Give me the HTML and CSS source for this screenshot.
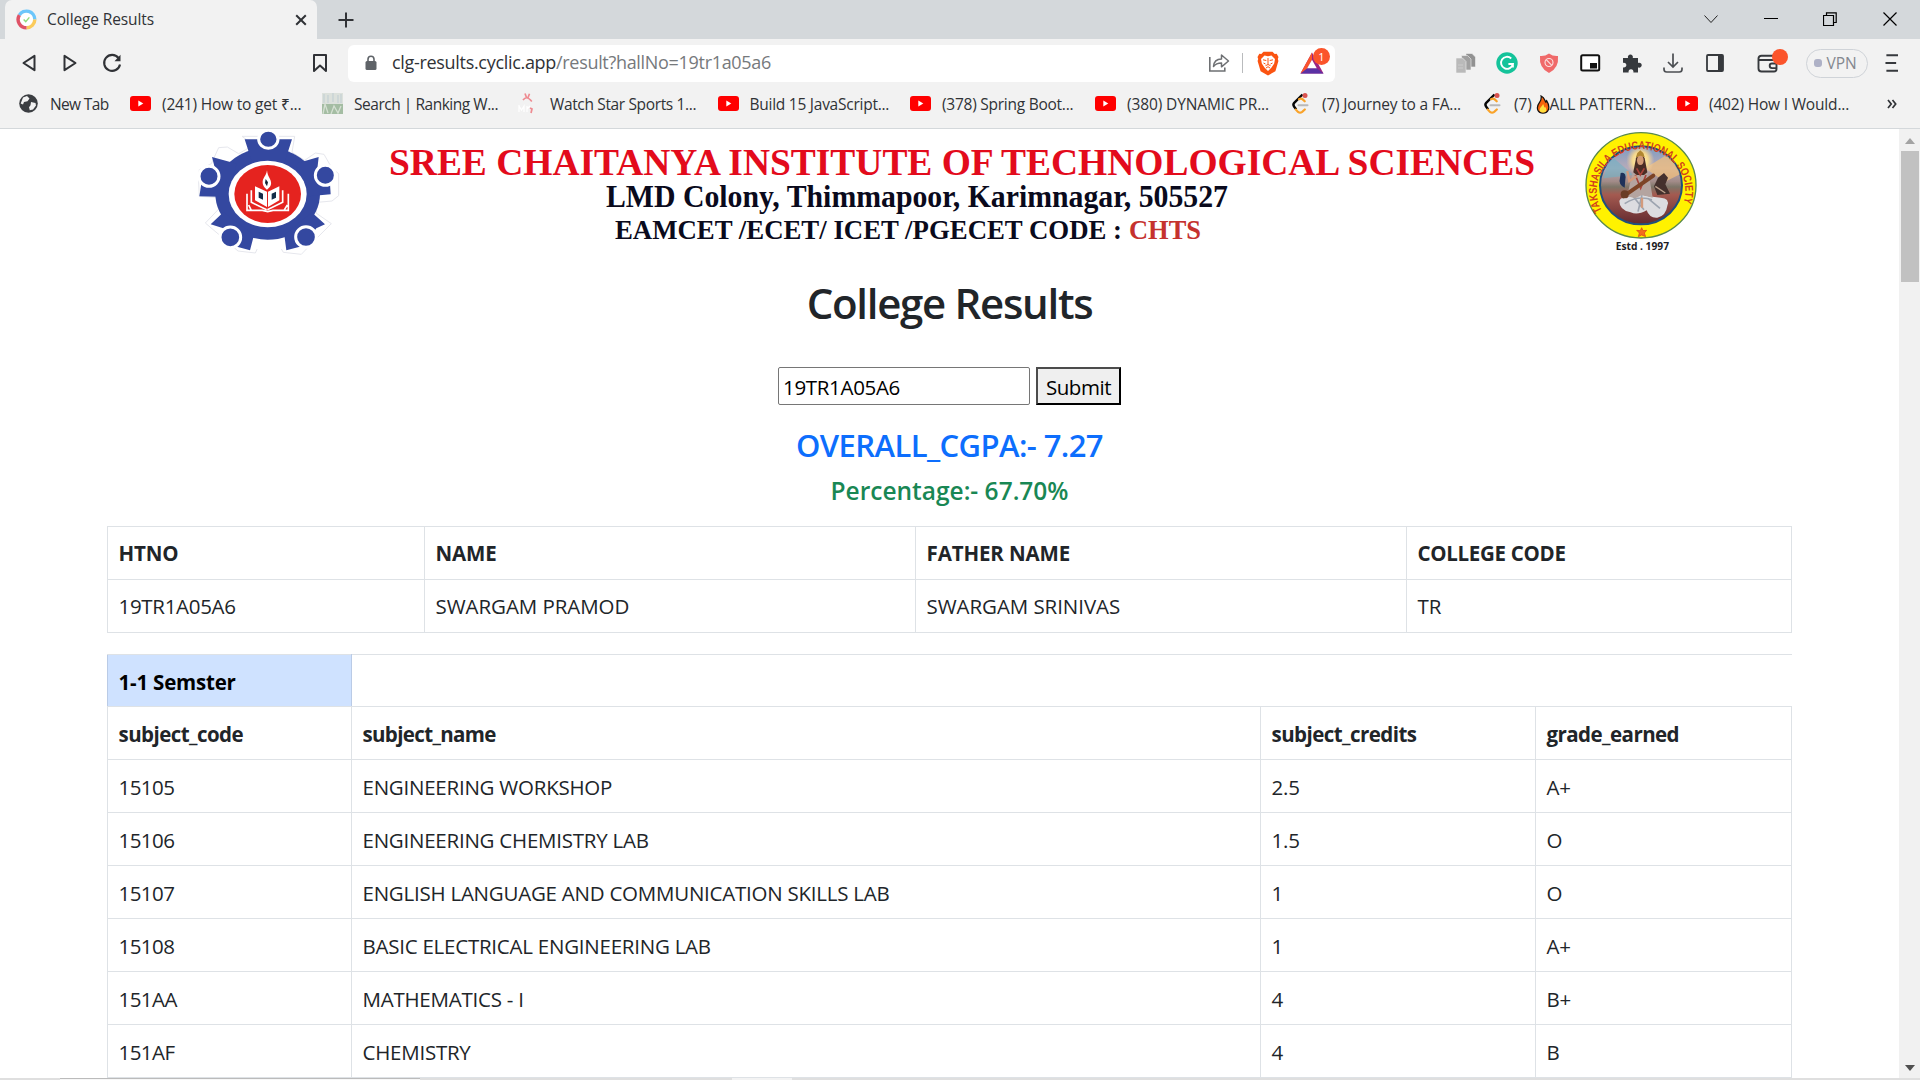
FILE: index.html
```html
<!DOCTYPE html>
<html lang="en">
<head>
<meta charset="utf-8">
<title>College Results</title>
<link rel="stylesheet" href="styles.css">
</head>
<body>
<svg class="defs" width="0" height="0" aria-hidden="true">
  <symbol id="youtube" viewBox="0 0 21 21">
    <rect x="0" y="3" width="21" height="15" rx="3" fill="#f00"/>
    <path d="M8.3 7.6v5.8l5-2.9z" fill="#fff"/>
  </symbol>
  <symbol id="leetcode" viewBox="0 0 21 21">
    <path d="M12.500 1.500 4.200 9.900q-1.600 1.800 0 3.800l2 2.700" fill="none" stroke="#070707" stroke-width="2.400"/>
    <path d="M5.800 16.600 8 18.900q2 1.500 4.200 0l2.600-2.400M9 6.200q2.300-1.200 4 .4l1.700 1.700" fill="none" stroke="#f9a32a" stroke-width="2.200" stroke-linecap="round"/>
    <path d="M8.500 12.300h9" stroke="#b9b9b9" stroke-width="2" stroke-linecap="round"/>
    <circle cx="15" cy="2.600" r="2.500" fill="#d9534f"/>
  </symbol>
</svg>

<header class="browser">
  <div class="tabstrip">
    <div class="tab">
      <svg class="favicon" viewBox="0 0 22 22" width="21" height="21">
        <circle cx="11" cy="11" r="7" fill="#fff"/>
        <g fill="none" stroke-width="3.600">
          <path d="M3.500 6.500A8.700 8.700 0 0 1 19.700 11" stroke="#6cc6fb"/>
          <path d="M19.700 11A8.700 8.700 0 0 1 11 19.700" stroke="#fbcb5b"/>
          <path d="M11 19.700A8.700 8.700 0 0 1 3.500 6.500" stroke="#df5266"/>
        </g>
        <path d="m8 11 2.200 2.200L14 8.800" fill="none" stroke="#8fdc7b" stroke-width="1.500"/>
      </svg>
      <span class="tab-title">College Results</span>
      <svg class="tab-close" viewBox="0 0 12 12" width="12" height="12"><path d="m1.200 1.200 9.600 9.600m0-9.600-9.600 9.600" stroke="#303236" stroke-width="2"/></svg>
    </div>
    <svg class="new-tab" viewBox="0 0 16 16" width="16" height="16"><path d="M8 .5v15M.5 8h15" stroke="#303236" stroke-width="2"/></svg>
    <div class="window-buttons">
      <svg viewBox="0 0 14 14"><path d="m.5 3.500 6.500 7 6.500-7" fill="none" stroke="#222"/></svg>
      <svg viewBox="0 0 14 14"><path d="M0 6.500h14" stroke="#000"/></svg>
      <svg viewBox="0 0 14 14"><path d="M.5 3.500h10v10H.5zM3.500 3V.8h9.700v9.700H11" fill="none" stroke="#000" stroke-width="1.200"/></svg>
      <svg viewBox="0 0 14 14"><path d="m.5.500 13 13m0-13-13 13" stroke="#000" stroke-width="1.200"/></svg>
    </div>
  </div>

  <div class="toolbar">
    <nav class="nav-buttons">
      <svg viewBox="0 0 24 24"><path d="M17.500 4.800v14.400L6.500 12z" fill="none" stroke="#303236" stroke-width="2" stroke-linejoin="round"/></svg>
      <svg viewBox="0 0 24 24"><path d="M6.500 4.800v14.400L17.500 12z" fill="none" stroke="#303236" stroke-width="2" stroke-linejoin="round"/></svg>
      <svg viewBox="0 0 24 24"><path d="M18.500 7A8 8 0 1 0 20 13.500" fill="none" stroke="#303236" stroke-width="2.100"/><path d="M20.500 3.800v6.500H14.500z" fill="#303236"/></svg>
    </nav>
    <svg class="bookmark" viewBox="0 0 24 24"><path d="M6 4h12v16l-6-5.500L6 20z" fill="none" stroke="#303236" stroke-width="2" stroke-linejoin="round"/></svg>
    <div class="address">
      <svg class="lock" viewBox="0 0 12 16"><rect x=".5" y="6" width="11" height="9" rx="1.500" fill="#5f6368"/><path d="M3 7V4.200a3 3 0 0 1 6 0V7" fill="none" stroke="#5f6368" stroke-width="1.600"/></svg>
      <span class="url"><span class="host">clg-results.cyclic.app</span>/result?hallNo=19tr1a05a6</span>
      <svg class="share" viewBox="0 0 22 20"><path d="M1.800 4v14h15v-3.500" fill="none" stroke="#6e7073" stroke-width="1.600"/><path d="M5.500 13.500c.4-5.500 3.400-7.500 8-7.500V2l7 6-7 5.800V10c-4 0-6 .8-8 3.500z" fill="none" stroke="#6e7073" stroke-width="1.500" stroke-linejoin="round"/></svg>
      <i class="divider"></i>
      <svg class="lion" viewBox="0 0 22 25"><path d="M6.500.800h9l2.200 2.300 2-.3L21.500 6l-.7 2 .6 2-3 10.300L11 24.500l-7.400-4.200L.6 10l.6-2L.5 6l1.800-3.200 2 .3z" fill="#fb5412"/><path d="m7.500 4.500 3.500.7 3.500-.7 3.500 3.600-.8 4.500-2.700 3.900L11 20l-3.500-3.500-2.700-3.900L4 8.100z" fill="#fff"/><path d="m6 8.800 3.300.7M16 8.800l-3.300.7M11 7v6.500m-2.500 1.200L11 13.500l2.500 1.200M9 17l2-1.300 2 1.300M6.500 12l2 1M15.500 12l-2 1" stroke="#fb5412" stroke-width="1" fill="none"/></svg>
      <div class="rewards">
        <svg viewBox="0 0 24 22"><path d="M12 .500 23.500 21.500H.500z" fill="#9b2483"/><path d="M.500 21.500h23l-6.700-5.200H7.200z" fill="#5a31a4"/><path d="M12 .500.500 21.500l6.700-5.200L12 7.800z" fill="#fb542b"/><path d="m12 7.800 4.800 8.500H7.200z" fill="#fff"/></svg>
        <span class="badge">1</span>
      </div>
    </div>
    <div class="extensions">
      <svg viewBox="0 0 24 24"><g stroke="#f2f2f2" stroke-width=".6"><path d="M12 2.500h6l3.500 3.500v10H12z" fill="#929292"/><path d="M7.500 4.500h6L17 8v11H7.500z" fill="#a0a0a0"/><path d="M2 7h6.500l3.500 3.500v11.500H2z" fill="#bababa"/></g><path d="M4 14h5M4 17h5" stroke="#ccc"/></svg>
      <svg viewBox="0 0 24 24"><circle cx="12" cy="12" r="10.700" fill="#14c39a"/><path d="M16.200 7.500a6 6 0 1 0 1.700 5.500h-4.500m4.500 0v3.600" fill="none" stroke="#fff" stroke-width="1.900"/></svg>
      <svg viewBox="0 0 24 24"><path d="M12 2.500q4 3 9 2.500 1.200 12-9 17Q1.800 17 3 5q5 .500 9-2.500z" fill="#f06a6a"/><circle cx="12" cy="11.500" r="4" fill="none" stroke="#fbe3e3" stroke-width="1.100"/><path d="m9.200 8.700 5.600 5.600" stroke="#fbe3e3" stroke-width="1.100"/></svg>
      <svg viewBox="0 0 24 24"><rect x="3.200" y="4.300" width="18" height="15.300" rx="1.500" fill="#fff" stroke="#111" stroke-width="2"/><path d="M12 12h7v5.500h-7z" fill="#111"/></svg>
      <svg viewBox="0 0 24 24"><path d="M3 7h5c-1.200-4.800 6-4.800 4.800 0H18v5c5-1.200 5 5.800 0 4.600V21.500h-4.600c1-4.500-5.800-4.500-4.800 0H3v-5c4.500.8 4.500-5.500 0-4.600z" fill="#36393d"/></svg>
      <svg viewBox="0 0 24 24"><path d="M12 2.500V16m-5-5 5 5 5-5M3 16.500v1.800q0 2.700 2.700 2.700h12.600q2.700 0 2.700-2.700v-1.800" fill="none" stroke="#4b4e52" stroke-width="1.700"/></svg>
      <svg viewBox="0 0 24 24"><rect x="4" y="4" width="16" height="16" rx="1" fill="none" stroke="#36393d" stroke-width="1.800"/><path d="M15 4h5v16h-5z" fill="#36393d"/></svg>
    </div>
    <div class="wallet">
      <svg viewBox="0 0 24 24"><path d="M17 4.800H5.500Q2.500 4.800 2.500 7.500v10q0 3 3 3H18q2.500 0 2.500-2.500v-6.500Q20.500 9 18 9H3m17.500 3.500h-4.500a2.300 2.300 0 0 0 0 4.600h4.500" fill="none" stroke="#36393d" stroke-width="1.900"/></svg>
      <i class="dot"></i>
    </div>
    <div class="vpn"><i class="vpn-dot"></i>VPN</div>
    <svg class="menu" viewBox="0 0 14 20"><path d="M1.500 1.700H14M.5 10h11.500M1.500 18.300H14" stroke="#36393d" stroke-width="2.100"/></svg>
  </div>

  <nav class="bookmarks">
    <a class="bm"><svg viewBox="0 0 21 21"><circle cx="10.500" cy="10.500" r="9.300" fill="#3b3e42"/><path d="M5 4.500 9 3l2.500 2.500-2 2.700-3.500.8-1 2.500-2.300-1zM13 9l4.500 1 .5 2.500-3 4-3.200.8-.8-3 1.500-2z" fill="#f2f2f2"/></svg><span class="w-newtab">New Tab</span></a>
    <a class="bm"><svg><use href="#youtube"/></svg><span class="w-norm">(241) How to get ₹...</span></a>
    <a class="bm"><svg viewBox="0 0 21 21"><path d="M0 0h21v11H0z" fill="#dce1dc"/><path d="M2 1v9M6 2v8M11 0v9M16 2v8M19 1v9" stroke="#c6d2d4" stroke-width="1.300"/><path d="M0 11h21v10H0z" fill="#a4bda3"/><path d="M1 21 3 11l3 9M9 21l3-8 4 7 3-7" fill="none" stroke="#d5e0d3" stroke-width="1.300"/></svg><span class="w-tight">Search | Ranking W...</span></a>
    <a class="bm"><svg viewBox="0 0 21 21"><path d="m7 .5 1.500 4M11.500.800 10 4.500M5 7q3.500-4.500 7.500 0l1.300 1.500M12 15l2 1-1 4" fill="none" stroke="#ee8b91" stroke-width="1.700"/><path d="M1 12v7m0-6 2.500 4L6 13v6m3-6v6m0-3 3-3" fill="none" stroke="#fff" stroke-width="1.200"/></svg><span class="w-star">Watch Star Sports 1...</span></a>
    <a class="bm"><svg><use href="#youtube"/></svg><span class="w-js">Build 15 JavaScript...</span></a>
    <a class="bm"><svg><use href="#youtube"/></svg><span class="w-js">(378) Spring Boot...</span></a>
    <a class="bm"><svg><use href="#youtube"/></svg><span class="w-dyn">(380) DYNAMIC PR...</span></a>
    <a class="bm"><svg><use href="#leetcode"/></svg><span class="w-norm">(7) Journey to a FA...</span></a>
    <a class="bm"><svg><use href="#leetcode"/></svg><span class="w-dyn">(7) <svg class="flame" viewBox="0 0 14 20"><path d="M5 1c4 2 3.500 4.500 5 6.500l.8-1.500c2.500 4 3 7.500 1.500 10.200C10.500 20 3.500 20 1.700 16.200.200 13 2 9.500 3.500 7.500 5 5.500 5.500 4 5 1z" fill="#f7630c" stroke="#111" stroke-width="1.300"/><path d="M7 9.500c-1 3-4 4-3.500 7 .8 2.500 6.300 2.500 7-.3.300-1.700-.8-2.700-1.300-4l-.8 1.200C8 12 8 10.500 7 9.500z" fill="#ffdf3d"/></svg>ALL PATTERN...</span></a>
    <a class="bm"><svg><use href="#youtube"/></svg><span class="w-norm">(402) How I Would...</span></a>
    <svg class="more" viewBox="0 0 10 10"><path d="m1 1 3.200 4L1 9m4.500-8L8.700 5 5.500 9" fill="none" stroke="#303236" stroke-width="1.700"/></svg>
  </nav>
</header>

<div class="viewport">
  <main class="page">
    <div class="banner">
      <svg class="gear-logo" viewBox="0 12 450 378">
        <path d="M156 34h158l-8 48 38 24 32-22 26 4 24 42 20 16v66l-20 16-44 4-4 32 46 32-46 46-44 46-54-6-12-20h-62l-10 22-52-6-58-50-40-34 48-50-6-26-60-4-2-40 2-40 36-18 22-48 26-2 34 20 46-26z" fill="#fff" stroke="#e6e7ed" stroke-width="3" stroke-linejoin="round"/>
        <g fill="#3448a0">
          <ellipse cx="233" cy="206" rx="157" ry="138"/>
          <path d="M164 43h142l-20 62H184zM66 96l74 20-30 100-82-2 6-38 46-26zM386 96l-70 20 40 98 66-6-2-32-40-26zM62 298l38-36 92 68-12 46-50-14-30-52zM405 298l-40-36-82 68 6 46 52-14 38-52z"/>
        </g>
        <path d="m186 372 12-25q35 6 74 0l14 25z" fill="#fff"/>
        <g fill="#3448a0" stroke="#fff" stroke-width="9">
          <ellipse cx="235" cy="43" rx="29" ry="27"/><circle cx="57" cy="154" r="30"/><circle cx="406" cy="151" r="30"/><circle cx="121" cy="337" r="31"/><circle cx="348" cy="336" r="31"/>
        </g>
        <ellipse cx="233" cy="207" rx="117" ry="100" fill="#fff"/>
        <ellipse cx="233" cy="207" rx="100" ry="87" fill="#e5231f"/>
        <path d="M231 136c-2 18-14 22-13 38 2 12 8 16 13 20 6-4 14-12 12-22-1-12-10-16-12-36z" fill="#fff"/>
        <path d="m227 162 7 10-3 12-6-10z" fill="#123"/>
        <path d="m195 184 36 16v46l-36-20zM268 184l-34 16v46l34-20z" fill="#fff"/>
        <path d="m206 200 13 6v18l-13-6zM258 200l-13 6v18l13-6z" fill="#132c48"/>
        <path d="M184 196v36l46 22M171 206v50h46l16 4 16-4h46v-50M278 196v36l-46 22M184 256l-8-16m106 16 10-16" fill="none" stroke="#fff" stroke-width="5"/>
      </svg>
      <svg class="banner-text" viewBox="0 0 1180 126">
        <text class="college" x="9" y="45.500" textLength="1146" lengthAdjust="spacingAndGlyphs">SREE CHAITANYA INSTITUTE OF TECHNOLOGICAL SCIENCES</text>
        <text class="place" x="226" y="78" textLength="622" lengthAdjust="spacingAndGlyphs">LMD Colony, Thimmapoor, Karimnagar, 505527</text>
        <text class="codes" x="235" y="110" textLength="507" lengthAdjust="spacingAndGlyphs">EAMCET /ECET/ ICET /PGECET CODE :</text>
        <text class="codes chts" x="749" y="110" textLength="72" lengthAdjust="spacingAndGlyphs">CHTS</text>
      </svg>
      <svg class="seal" viewBox="0 12 450 378">
        <defs>
          <linearGradient id="sky" x1="0" y1="0" x2="0" y2="1"><stop offset="0" stop-color="#7d9cc2"/><stop offset=".28" stop-color="#b7abb9"/><stop offset=".45" stop-color="#a28b88"/><stop offset=".52" stop-color="#7d7568"/><stop offset=".62" stop-color="#a45a50"/><stop offset="1" stop-color="#62292f"/></linearGradient>
          <radialGradient id="halo"><stop offset="0" stop-color="#fff3bd"/><stop offset=".55" stop-color="#f5d98e"/><stop offset="1" stop-color="#f3cba0" stop-opacity="0"/></radialGradient>
          <clipPath id="disc"><ellipse cx="213" cy="181" rx="122" ry="115"/></clipPath>
          <path id="arc" d="M96 258A133 126 0 1 1 332 255"/>
        </defs>
        <ellipse cx="213" cy="181" rx="165" ry="158" fill="#fff200" stroke="#5a8a4a" stroke-width="4"/>
        <ellipse cx="213" cy="181" rx="123" ry="117" fill="url(#sky)" stroke="#1f4f7d" stroke-width="6"/>
        <g clip-path="url(#disc)">
          <path d="m225 130 80-50 40 60-60 30z" fill="#f3c07a" opacity=".7"/><path d="m120 90 70 60-90 10z" fill="#6fb3c4" opacity=".6"/>
          <ellipse cx="211" cy="106" rx="42" ry="46" fill="url(#halo)"/>
          <path d="M148 228q6-14 22-8l20-16 46 10 36 4q28 2 20 24-4 30-30 36-24 2-32-22-28 16-48 6-34-6-34-34z" fill="#dcdce0"/>
          <path d="M164 236q40-26 82-12M186 210l36 44m-6-44-12 50m30-40 36 30" stroke="#9da4b0" stroke-width="5" fill="none"/>
          <path d="M192 130q-14 50-20 84l24 6 20-10 32 8q-6-46-18-88z" fill="#b4a4a0"/>
          <path d="M198 100q12-30 26 0l8 42-10 8h-22l-10-8z" fill="#4b2d25"/>
          <path d="m198 96 4-12 9-8 9 8 4 12z" fill="#b1862f"/>
          <ellipse cx="211" cy="106" rx="10" ry="14" fill="#d29a74"/>
          <path d="m200 130 11 20 12-20M196 150l16 40 16-40" stroke="#a8423a" stroke-width="5" fill="none"/>
          <path d="m160 214 90-62" stroke="#7c4326" stroke-width="12" stroke-linecap="round"/><circle cx="164" cy="208" r="12" fill="#6b3d26"/>
          <path d="M152 144q18-4 14 20l-2 24q-20-10-14-30z" fill="#1e3159"/>
          <path d="m264 158 18-14 12 14-8 20 14 28-38 4-10-26z" fill="#44302d"/><path d="m256 184 30 20" stroke="#bca08b" stroke-width="4"/>
          <path d="m172 138 6 30 22-14M216 218v30" stroke="#d39a7c" stroke-width="7" fill="none"/>
        </g>
        <text class="seal-ring"><textPath href="#arc" textLength="505" lengthAdjust="spacingAndGlyphs">TAKSHASILA EDUCATIONAL SOCIETY</textPath></text>
        <path d="m215 308 4 9 11-1-7 8 4 11-12-5-10 5 3-11-8-8 11 1z" fill="#f26c1d" stroke="#d43a1a" stroke-width="2"/>
        <text class="estd" x="137" y="374" textLength="160" lengthAdjust="spacingAndGlyphs">Estd . 1997</text>
      </svg>
    </div>

    <h1 class="title">College Results</h1>
    <form class="lookup">
      <input class="hall" type="text" value="19TR1A05A6">
      <button class="submit" type="button">Submit</button>
    </form>
    <h2 class="cgpa">OVERALL_CGPA:- 7.27</h2>
    <h3 class="percent">Percentage:- 67.70%</h3>

    <table class="grid student">
      <colgroup><col class="s1"><col class="s2"><col class="s2"><col></colgroup>
      <tr class="caps"><th>HTNO</th><th>NAME</th><th>FATHER NAME</th><th class="college-code">COLLEGE CODE</th></tr>
      <tr class="person"><td>19TR1A05A6</td><td>SWARGAM PRAMOD</td><td>SWARGAM SRINIVAS</td><td>TR</td></tr>
    </table>

    <table class="grid semester">
      <colgroup><col class="c1"><col class="c2"><col class="c3"><col></colgroup>
      <tr class="sem-row"><th class="sem">1-1 Semster</th><td class="blank" colspan="3"></td></tr>
      <tr><th>subject_code</th><th class="subject">subject_name</th><th>subject_credits</th><th>grade_earned</th></tr>
      <tr><td class="code">15105</td><td>ENGINEERING WORKSHOP</td><td>2.5</td><td>A+</td></tr>
      <tr><td class="code">15106</td><td>ENGINEERING CHEMISTRY LAB</td><td>1.5</td><td>O</td></tr>
      <tr><td class="code">15107</td><td>ENGLISH LANGUAGE AND COMMUNICATION SKILLS LAB</td><td>1</td><td>O</td></tr>
      <tr><td class="code">15108</td><td>BASIC ELECTRICAL ENGINEERING LAB</td><td>1</td><td>A+</td></tr>
      <tr><td class="code">151AA</td><td>MATHEMATICS - I</td><td>4</td><td>B+</td></tr>
      <tr><td class="code">151AF</td><td>CHEMISTRY</td><td>4</td><td>B</td></tr>
    </table>
  </main>
  <div class="scrollbar">
    <svg viewBox="0 0 10 6"><path d="m5 0 5 6H0z" fill="#a3a3a3"/></svg>
    <div class="thumb"></div>
    <svg class="down" viewBox="0 0 10 6"><path d="m5 6 5-6H0z" fill="#505050"/></svg>
  </div>
</div>
<footer class="edge"><i class="edge-search"></i><i class="edge-app"></i></footer>
</body>
</html>
```
FILE: styles.css
```css
* { box-sizing: border-box; }

body {
  margin: 0;
  width: 1920px;
  height: 1080px;
  display: flex;
  flex-direction: column;
  overflow: hidden;
  background: #fff;
  color: #212529;
  font-family: "Open Sans", "Noto Sans", sans-serif;
}

svg { display: block; flex: none; }
.defs { position: absolute; }

/* Browser chrome */
.browser {
  flex: none;
  height: 129px;
  background: #f2f2f2;
  border-bottom: 1px solid #d4d8db;
  color: #303236;
}

.tabstrip {
  display: flex;
  align-items: center;
  height: 39px;
  padding-left: 5px;
  background: #d4d8db;
}
.tab {
  display: flex;
  align-items: center;
  width: 312px;
  height: 39px;
  padding: 0 10px 0 11px;
  background: #f2f2f2;
  border-radius: 7px 7px 0 0;
}
.tab-title { flex: 1; margin-left: 10px; padding-bottom: 1px; font-size: 15.500px; letter-spacing: -.12px; }
.new-tab { margin-left: 21px; }
.window-buttons { display: flex; gap: 45.500px; margin-left: auto; padding: 0 23.500px 1px 0; }
.window-buttons svg { width: 14px; height: 14px; }

.toolbar { display: flex; align-items: center; height: 48px; }
.nav-buttons { display: grid; grid-template-columns: repeat(3, 41.500px); justify-items: center; padding-left: 8px; }
.nav-buttons svg, .bookmark, .extensions svg, .wallet svg { width: 24px; height: 24px; }
.bookmark { margin-left: 175.500px; }

.address {
  display: flex;
  align-items: center;
  width: 987px;
  height: 37px;
  margin-left: 16px;
  padding: 0 11px 0 17px;
  background: #fff;
  border-radius: 6px;
}
.lock { width: 12px; height: 16px; }
.url { flex: 1; margin-left: 15px; padding-bottom: 2px; font-size: 18px; letter-spacing: -.31px; color: #76797c; white-space: nowrap; }
.host { color: #303236; }
.share { width: 22px; height: 20px; margin-right: -1px; }
.divider { width: 1px; height: 20px; margin: 0 14px 0 13px; background: #b9bbbd; }
.lion { width: 22px; height: 25px; }
.rewards { position: relative; margin-left: 21px; }
.rewards svg { width: 24px; height: 22px; }
.badge {
  position: absolute;
  left: 13px;
  top: -4px;
  width: 17px;
  height: 17px;
  border-radius: 50%;
  background: #fb542b;
  color: #fff;
  font-size: 11px;
  line-height: 17px;
  text-align: center;
}

.extensions { display: grid; grid-template-columns: repeat(7, 41.500px); justify-items: center; margin-left: 110px; }
.wallet { position: relative; margin-left: 20px; }
.dot { position: absolute; left: 16px; top: -2px; width: 16px; height: 16px; border-radius: 50%; background: #fb542b; }
.vpn {
  display: flex;
  align-items: center;
  gap: 5px;
  width: 62px;
  height: 29px;
  margin-left: 26px;
  padding: 0 0 1px 7px;
  border: 1.500px solid #cfd3d8;
  border-radius: 15px;
  color: #84888f;
  font-size: 15.500px;
}
.vpn-dot { width: 8px; height: 8px; border-radius: 3px; background: #aeb1c6; }
.menu { width: 13px; height: 20px; margin-left: 17px; }

.bookmarks {
  display: grid;
  grid-template-columns: 112px 192px 196px 199.500px 192.500px 185px 195px 192px 195px 209px 1fr;
  align-items: center;
  height: 33px;
  padding-left: 18px;
}
.bm { display: flex; align-items: center; gap: 11px; font-size: 15.500px; white-space: nowrap; }
.bm > svg { width: 21px; height: 21px; }
.flame { display: inline-block; width: 14px; height: 19px; vertical-align: -4px; }
.w-norm { letter-spacing: -.18px; }
.w-newtab { letter-spacing: -.65px; }
.w-tight { letter-spacing: -.47px; }
.w-star { letter-spacing: -.36px; }
.w-js { letter-spacing: -.25px; }
.w-dyn { letter-spacing: -.12px; }
.more { width: 10px; height: 10px; margin-left: 1px; }

/* Web page */
.viewport { display: flex; height: 949px; overflow: hidden; }
.page { flex: 1; display: flex; flex-direction: column; align-items: center; overflow: hidden; }

.banner { flex: none; display: flex; align-self: stretch; height: 126px; padding-left: 190px; }
.gear-logo, .seal { width: 150px; height: 126px; }
.banner-text { width: 1180px; height: 126px; margin-left: 40px; margin-right: 10px; }
.banner-text text { font-family: "Liberation Serif", serif; font-weight: 700; fill: #0a0a1c; }
.banner-text .college { font-size: 37px; fill: #e30b1c; }
.place { font-size: 31px; }
.codes { font-size: 27.500px; }
.banner-text .chts { fill: #c5322e; }
.seal-ring { font: 700 34px "Liberation Sans", sans-serif; fill: #d2401c; }
.estd { font: 700 31px "Open Sans", sans-serif; fill: #1c1c24; }

.title { margin: 22px 0 0; font-size: 42px; font-weight: 600; line-height: 52px; letter-spacing: -1.300px; }

.lookup { display: flex; gap: 6px; margin-top: 38px; }
.hall {
  width: 252px;
  height: 38px;
  padding: 1px 4px 0;
  border: 1px solid #767676;
  border-radius: 2px;
  background: #fff;
  color: #000;
  font: 20.500px "Open Sans", sans-serif;
  letter-spacing: -.32px;
}
.submit {
  width: 85px;
  height: 38px;
  padding: 1px 0 0;
  border: 2px solid #000;
  border-top-color: #4c4c4c;
  border-left-color: #4c4c4c;
  background: #efefef;
  color: #000;
  font: 20.500px "Open Sans", sans-serif;
  letter-spacing: -.45px;
}
.cgpa { margin: 22px 0 0; font-size: 31px; font-weight: 600; line-height: 36px; letter-spacing: -.58px; color: #0d6efd; }
.percent { margin: 13px 0 20px; font-size: 24.500px; font-weight: 600; line-height: 30px; letter-spacing: 0; color: #198754; }

.grid {
  flex: none;
  width: 1685px;
  margin-bottom: 21px;
  border-collapse: collapse;
  table-layout: fixed;
  font-size: 20.500px;
  line-height: 30px;
}
.grid tr { height: 53px; }
.grid th, .grid td { padding: 0 10.500px; border: 1px solid #dee2e6; text-align: left; letter-spacing: -.24px; }
.semester th, .semester td { padding-top: 2px; }
.grid th { letter-spacing: -.55px; }
.grid .caps th { letter-spacing: -.12px; }
.grid .caps .college-code { letter-spacing: -.3px; }
.grid .person td { letter-spacing: -.06px; }
.grid .person td:first-child { letter-spacing: -.3px; }
.grid .subject { letter-spacing: -.65px; }
.grid .code { letter-spacing: -.55px; }
.s1 { width: 317px; }
.s2 { width: 491px; }
.c1 { width: 244px; }
.c2 { width: 909px; }
.c3 { width: 275px; }
.grid .sem-row { height: 52px; }
.grid .sem { background: #cfe2ff; border-left-color: #bacbe6; border-right-color: #bacbe6; color: #000; letter-spacing: -.2px; }
.grid .blank { border-right-style: hidden; }

.scrollbar {
  flex: none;
  display: flex;
  flex-direction: column;
  align-items: center;
  width: 21px;
  padding: 9px 0 7px;
  background: #f1f1f1;
}
.scrollbar svg { width: 10px; height: 6px; }
.thumb { width: 18px; height: 131px; margin-top: 7px; background: #c1c1c1; }
.scrollbar .down { margin-top: auto; }

/* Sliver of the taskbar under the window */
.edge { display: flex; height: 2px; padding-left: 60px; background: #dfdfdf; }
.edge-search { width: 360px; border-top: 1px solid #bbb; background: #f7f7f7; }
.edge-app { width: 60px; margin-left: 312px; background: #f3f3f3; }
```
